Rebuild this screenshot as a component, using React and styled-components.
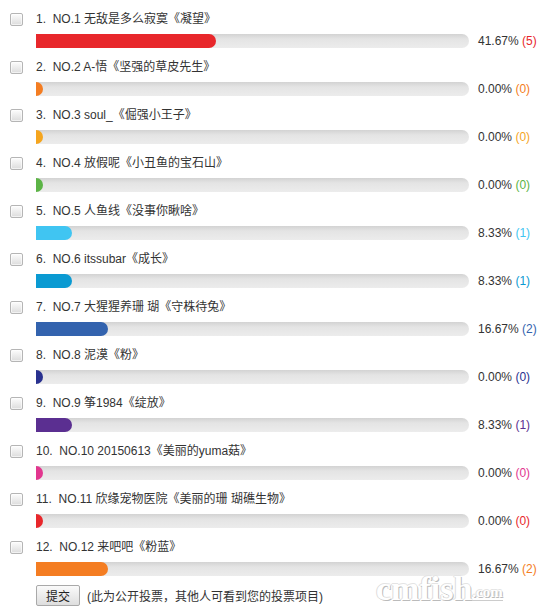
import React from 'react';
import styled, { createGlobalStyle } from 'styled-components';

const GlobalStyle = createGlobalStyle`
  html, body {
    margin: 0;
    padding: 0;
    background: #fff;
  }
  body {
    font-family: "Liberation Sans", "Noto Sans CJK SC", sans-serif;
    font-size: 12px;
    color: #333;
  }
`;

const Page = styled.div`
  position: relative;
  width: 549px;
  height: 611px;
  padding: 9px 0 0 10px;
  box-sizing: border-box;
  overflow: hidden;
`;

const Row = styled.div`
  display: grid;
  grid-template-columns: 26px 433px auto;
  grid-template-rows: 20px 14px;
  row-gap: 5px;
  margin-bottom: 9px;
`;

const Check = styled.input.attrs({ type: 'checkbox' })`
  appearance: none;
  -webkit-appearance: none;
  width: 13px;
  height: 13px;
  margin: 4px 0 0 0;
  border: 1px solid #b5b5b5;
  border-radius: 2px;
  box-sizing: border-box;
  background: linear-gradient(#fdfdfd, #dcdcdc);
  box-shadow: inset 0 0 0 1px rgba(255, 255, 255, 0.6);
`;

const Label = styled.div`
  grid-column: 2 / 4;
  line-height: 20px;
  white-space: pre;
  color: #333;
`;

const Track = styled.div`
  grid-column: 2;
  height: 14px;
  border-radius: 0 7px 7px 0;
  background: linear-gradient(#d3d3d3, #e4e4e4 35%, #ececec);
  overflow: hidden;
`;

const Fill = styled.div`
  height: 100%;
  min-width: 7px;
  border-radius: 0 7px 7px 0;
  background: ${(p) => p.$color};
`;

const Percent = styled.div`
  grid-column: 3;
  margin-left: 9px;
  line-height: 14px;
  white-space: nowrap;
  color: #333;
`;

const Count = styled.span`
  color: ${(p) => p.$color};
`;

const Footer = styled.div`
  display: flex;
  align-items: center;
  gap: 7px;
  margin-top: 1px;
  padding-left: 26px;
`;

const SubmitButton = styled.button`
  width: 44px;
  height: 21px;
  padding: 0;
  border: 1px solid #a9a9a9;
  border-radius: 2px;
  background: linear-gradient(#fafafa, #dedede);
  font-family: "Liberation Sans", "Noto Sans CJK SC", sans-serif;
  font-size: 12px;
  color: #222;
`;

const Note = styled.span`
  color: #333;
`;

const Watermark = styled.div`
  position: absolute;
  left: 376px;
  top: 572px;
  display: flex;
  align-items: flex-end;
  pointer-events: none;
  font-family: "Liberation Serif", serif;
  color: #fff;
  text-shadow: 1px 1px 0 #bbb, -1px 0 0 #ddd, 0 -1px 0 #e4e4e4;
`;

const MarkBig = styled.span`
  font-size: 34px;
  font-weight: bold;
  line-height: 34px;
`;

const MarkSmall = styled.span`
  font-size: 15px;
  font-weight: bold;
  line-height: 15px;
  margin-bottom: 5px;
  border-bottom: 1px solid #ccc;
`;

const items = [
  { label: '1.  NO.1 无敌是多么寂寞《凝望》', pct: 41.67, n: 5, color: '#e8272b' },
  { label: '2.  NO.2 A-悟《坚强的草皮先生》', pct: 0, n: 0, color: '#f47d22' },
  { label: '3.  NO.3 soul_《倔强小王子》', pct: 0, n: 0, color: '#f5a51e' },
  { label: '4.  NO.4 放假呢《小丑鱼的宝石山》', pct: 0, n: 0, color: '#5cb446' },
  { label: '5.  NO.5 人鱼线《没事你瞅啥》', pct: 8.33, n: 1, color: '#40c5f2' },
  { label: '6.  NO.6 itssubar《成长》', pct: 8.33, n: 1, color: '#0a9ad2' },
  { label: '7.  NO.7 大猩猩养珊 瑚《守株待兔》', pct: 16.67, n: 2, color: '#3363ae' },
  { label: '8.  NO.8 泥漠《粉》', pct: 0, n: 0, color: '#29318f' },
  { label: '9.  NO.9 筝1984《绽放》', pct: 8.33, n: 1, color: '#5b2f91' },
  { label: '10.  NO.10 20150613《美丽的yuma菇》', pct: 0, n: 0, color: '#e2368f' },
  { label: '11.  NO.11 欣缘宠物医院《美丽的珊 瑚礁生物》', pct: 0, n: 0, color: '#e8272b' },
  { label: '12.  NO.12 来吧吧《粉蓝》', pct: 16.67, n: 2, color: '#f47d22' },
];

export default function App() {
  return (
    <Page>
      <GlobalStyle />
      {items.map((it, i) => (
        <Row key={i}>
          <Check />
          <Label>{it.label}</Label>
          <Track>
            <Fill $color={it.color} style={{ width: `${it.pct}%` }} />
          </Track>
          <Percent>
            {it.pct.toFixed(2)}% <Count $color={it.color}>({it.n})</Count>
          </Percent>
        </Row>
      ))}
      <Footer>
        <SubmitButton>提交</SubmitButton>
        <Note>(此为公开投票，其他人可看到您的投票项目)</Note>
      </Footer>
      <Watermark>
        <MarkBig>cmfish</MarkBig>
        <MarkSmall>.com</MarkSmall>
      </Watermark>
    </Page>
  );
}
